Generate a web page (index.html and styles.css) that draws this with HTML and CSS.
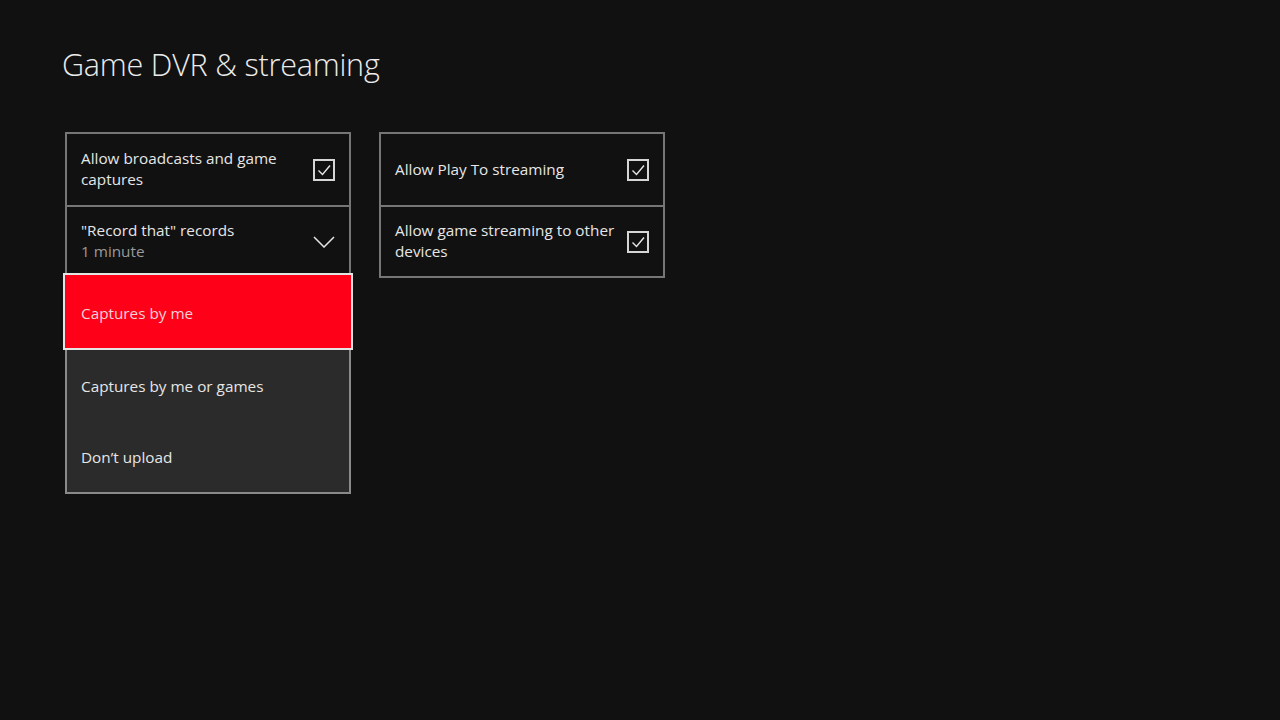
FILE: index.html
```html
<!DOCTYPE html>
<html>
<head>
<meta charset="utf-8">
<link rel="stylesheet" href="styles.css">
</head>
<body>
<div class="page">
  <h1 class="title">Game DVR &amp; streaming</h1>
  <div class="columns">
    <div class="column">
      <div class="card">
        <div class="row">
          <div class="label">Allow broadcasts and game captures</div>
          <span class="check"><svg viewBox="0 0 18 18" width="18" height="18"><path d="M3.5 9.5 L7.5 13.5 L15 4.5" fill="none" stroke="#e6e6e6" stroke-width="1.4"/></svg></span>
        </div>
        <div class="row">
          <div class="label">"Record that" records<div class="sub">1 minute</div></div>
          <svg class="chev" viewBox="0 0 22 12" width="22" height="12"><path d="M1 1 L11 11 L21 1" fill="none" stroke="#e6e6e6" stroke-width="1.5"/></svg>
        </div>
      </div>
      <div class="dropdown">
        <div class="opt selected">Captures by me</div>
        <div class="list">
          <div class="opt">Captures by me or games</div>
          <div class="opt">Don’t upload</div>
        </div>
      </div>
    </div>
    <div class="column">
      <div class="card">
        <div class="row">
          <div class="label">Allow Play To streaming</div>
          <span class="check"><svg viewBox="0 0 18 18" width="18" height="18"><path d="M3.5 9.5 L7.5 13.5 L15 4.5" fill="none" stroke="#e6e6e6" stroke-width="1.4"/></svg></span>
        </div>
        <div class="row">
          <div class="label">Allow game streaming to other devices</div>
          <span class="check"><svg viewBox="0 0 18 18" width="18" height="18"><path d="M3.5 9.5 L7.5 13.5 L15 4.5" fill="none" stroke="#e6e6e6" stroke-width="1.4"/></svg></span>
        </div>
      </div>
    </div>
  </div>
</div>
</body>
</html>
```
FILE: styles.css
```css
* { box-sizing: border-box; }
html, body {
  margin: 0;
  padding: 0;
  background: #111111;
  width: 1280px;
  height: 720px;
  overflow: hidden;
  font-family: "Open Sans", "Noto Sans", sans-serif;
  color: #e6e6e6;
}
.page {
  padding: 0 0 0 62px;
}
.title {
  margin: 0;
  padding-top: 42px;
  font-size: 30.5px;
  font-weight: 300;
  line-height: 44px;
  color: #ececec;
  letter-spacing: -0.2px;
}
.columns {
  display: flex;
  gap: 28px;
  margin-top: 46px;
  padding-left: 3px;
}
.column {
  position: relative;
  width: 286px;
}
.card {
  border: 2px solid #767676;
  width: 286px;
}
.row {
  display: flex;
  align-items: center;
  justify-content: space-between;
  height: 71px;
  padding: 0 14px;
  gap: 10px;
}
.row + .row {
  border-top: 2px solid #767676;
}
.label {
  font-size: 15.3px;
  line-height: 21px;
  color: #e6e6e6;
  padding-bottom: 1px;
}
.sub {
  color: #9a9a9a;
}
.check {
  flex: none;
  width: 22px;
  height: 22px;
  border: 2px solid #d6d6d6;
  display: flex;
  align-items: center;
  justify-content: center;
}
.check svg { display: block; }
.chev {
  flex: none;
  display: block;
  margin-right: 0;
}
.dropdown {
  position: absolute;
  top: 141px;
  left: -2px;
  width: 290px;
}
.opt {
  height: 72px;
  display: flex;
  align-items: center;
  padding-left: 14px;
  font-size: 15.3px;
  color: #e6e6e6;
}
.opt.selected {
  height: 77px;
  background: #ff0019;
  border: 2px solid #e4e4e4;
  padding-left: 16px;
  padding-top: 2px;
  color: #f4d4d6;
}
.list {
  margin: 0 2px;
  background: #2b2b2b;
  border: 2px solid #8a8a8a;
  border-top: none;
}
.list .opt:last-child {
  height: 70px;
}
```
